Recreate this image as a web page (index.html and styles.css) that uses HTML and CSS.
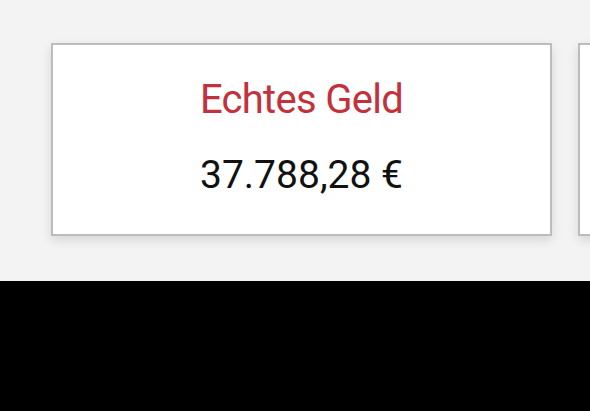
FILE: index.html
```html
<!DOCTYPE html>
<html lang="de">
<head>
    <meta charset="UTF-8">
    <title>Kontostand</title>
    <meta name="viewport" content="width=device-width, initial-scale=1.0">
    <link rel="stylesheet" href="styles.css">
</head>
<body>
    <div class="balance-strip">
        <div class="balance-card">
            <div class="balance-label">Echtes Geld</div>
            <div class="balance-value">37.788,28 €</div>
        </div>
        <div class="balance-card"></div>
    </div>
    <div class="bottom-bar"></div>
</body>
</html>
```

FILE: styles.css
```css
body {
    margin: 0;
    background-color: #000;
    font-family: Roboto, "Liberation Sans", sans-serif;
    height: 411px;
    overflow: hidden;
}

.balance-strip {
    background-color: #f3f3f3;
    height: 281px;
    box-sizing: border-box;
    padding: 43px 0 0 51px;
    display: flex;
    gap: 26px;
    overflow: hidden;
}

.balance-card {
    flex: 0 0 auto;
    width: 501px;
    height: 193px;
    box-sizing: border-box;
    background: #fff;
    border: 2px solid #bcbcbc;
    box-shadow: 0 4px 10px rgba(0, 0, 0, 0.12);
    display: flex;
    flex-direction: column;
    align-items: center;
    padding-top: 31px;
}

.balance-label {
    color: #c2323c;
    font-size: 40px;
    line-height: 48px;
    letter-spacing: -0.7px;
}

.balance-value {
    color: #111;
    font-size: 39px;
    line-height: 46px;
    margin-top: 28px;
}
```
